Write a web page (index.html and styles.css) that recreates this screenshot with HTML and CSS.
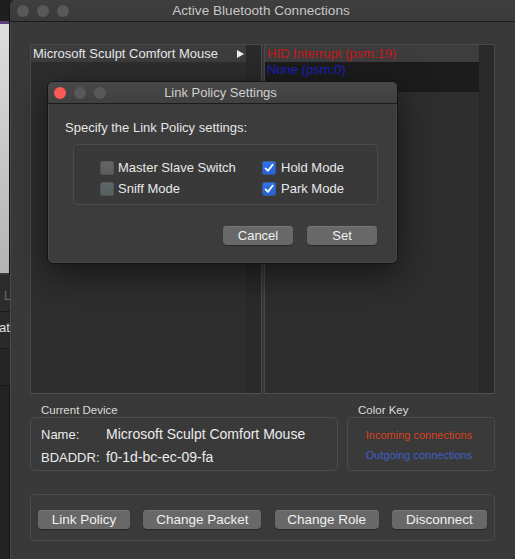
FILE: index.html
```html
<!DOCTYPE html>
<html>
<head>
<meta charset="utf-8">
<link rel="stylesheet" href="styles.css">
</head>
<body>
<div class="screen">
  <div class="desktop">
    <div class="d-top"></div>
    <div class="d-purple"></div>
    <div class="d-light"></div>
    <div class="d-row d-row1"><span class="d-text d-l">L</span></div>
    <div class="d-row d-row2"><span class="d-text d-at">at</span></div>
    <div class="d-row d-row3"></div>
    <div class="d-rest"></div>
  </div>
  <div class="window">
    <div class="titlebar">
      <div class="lights">
        <span class="light gray"></span><span class="light gray"></span><span class="light gray"></span>
      </div>
      <div class="title">Active Bluetooth Connections</div>
    </div>
    <div class="content">
      <div class="lists">
        <div class="list list-left">
          <div class="list-main">
            <div class="row sel"><span>Microsoft Sculpt Comfort Mouse</span><span class="arrow"></span></div>
          </div>
          <div class="scroller"></div>
        </div>
        <div class="list list-right">
          <div class="list-main">
            <div class="row sel red">HID Interrupt (psm:19)</div>
            <div class="row dark blue">None (psm:0)</div>
            <div class="row dark short"></div>
          </div>
          <div class="scroller"></div>
        </div>
      </div>
      <div class="info">
        <div class="group device-group">
          <div class="group-label">Current Device</div>
          <div class="box device-box">
            <div class="kv"><span class="k">Name:</span><span class="v">Microsoft Sculpt Comfort Mouse</span></div>
            <div class="kv"><span class="k">BDADDR:</span><span class="v">f0-1d-bc-ec-09-fa</span></div>
          </div>
        </div>
        <div class="group key-group">
          <div class="group-label">Color Key</div>
          <div class="box key-box">
            <div class="key incoming">Incoming connections</div>
            <div class="key outgoing">Outgoing connections</div>
          </div>
        </div>
      </div>
      <div class="box actions">
        <button class="btn w-link">Link Policy</button>
        <button class="btn w-packet">Change Packet</button>
        <button class="btn w-role">Change Role</button>
        <button class="btn w-disc">Disconnect</button>
      </div>
    </div>
  </div>

  <div class="dialog">
    <div class="dtitlebar">
      <div class="lights dlights">
        <span class="light red-l"></span><span class="light gray"></span><span class="light gray"></span>
      </div>
      <div class="dtitle">Link Policy Settings</div>
    </div>
    <div class="dbody">
      <div class="prompt">Specify the Link Policy settings:</div>
      <div class="box checks">
        <label class="check"><span class="cb"></span>Master Slave Switch</label>
        <label class="check"><span class="cb on"><svg viewBox="0 0 14 14" width="14" height="14"><path d="M3.6 7.4 L6 9.8 L10.6 3.8" fill="none" stroke="#fff" stroke-width="1.8" stroke-linecap="round" stroke-linejoin="round"/></svg></span>Hold Mode</label>
        <label class="check"><span class="cb tint"></span>Sniff Mode</label>
        <label class="check"><span class="cb on"><svg viewBox="0 0 14 14" width="14" height="14"><path d="M3.6 7.4 L6 9.8 L10.6 3.8" fill="none" stroke="#fff" stroke-width="1.8" stroke-linecap="round" stroke-linejoin="round"/></svg></span>Park Mode</label>
      </div>
      <div class="dbuttons">
        <button class="btn dbtn">Cancel</button>
        <button class="btn dbtn">Set</button>
      </div>
    </div>
  </div>
</div>
</body>
</html>
```
FILE: styles.css
```css
html, body {
  margin: 0;
  padding: 0;
}
body {
  width: 515px;
  height: 559px;
  overflow: hidden;
  background: #222;
  font-family: "Liberation Sans", Arial, sans-serif;
  font-size: 13px;
}
.screen {
  position: relative;
  display: flex;
  width: 515px;
  height: 559px;
  overflow: hidden;
}

/* desktop strip */
.desktop {
  width: 10px;
  flex: none;
  display: flex;
  flex-direction: column;
  background: #242424;
  overflow: hidden;
}
.d-top { height: 21px; background: #1f1f1f; }
.d-purple { height: 3px; background: #5b3f7c; }
.d-light { height: 249px; background: linear-gradient(#dedede, #c4c4c4 60%, #b4b4b4); border-bottom: 2px solid #3a3a3a; }
.d-row { height: 36px; border-bottom: 1px solid #1a1a1a; background: #2b2b2b; position: relative; }
.d-row1 { background: #2c2c2c; }
.d-row2 { background: #2a2a2a; }
.d-row3 { background: #262626; }
.d-rest { flex: 1; background: #232323; }
.d-text { font-size: 13px; white-space: nowrap; display: block; }
.d-l { color: #6e6e6e; padding: 14px 0 0 4px; font-size: 12px; }
.d-at { color: #e0e0e0; padding: 8px 0 0 0; margin-left: -1px; }

/* main window */
.window {
  flex: 1;
  background: #393939;
  border-top-left-radius: 6px;
  box-shadow: inset 1px 0 0 #4a4a4a, -1px 0 0 #151515;
  display: flex;
  flex-direction: column;
}
.titlebar {
  height: 21px;
  border-bottom: 1px solid #1c1c1c;
  background: linear-gradient(#3f3f3f, #3a3a3a);
  border-top-left-radius: 6px;
  display: flex;
  align-items: center;
  position: relative;
}
.lights {
  display: flex;
  gap: 8px;
  padding-left: 7px;
}
.light {
  width: 12px;
  height: 12px;
  border-radius: 50%;
  display: block;
}
.light.gray { background: #585858; }
.light.red-l { background: #fc5b55; }
.title {
  position: absolute;
  left: 0;
  right: 0;
  top: 0;
  line-height: 22px;
  text-align: center;
  color: #c6c6c6;
  font-size: 13.6px;
  padding-right: 3px;
}

.content {
  padding: 22px 20px 0 20px;
  display: flex;
  flex-direction: column;
}
.lists {
  display: flex;
  gap: 2px;
  height: 350px;
}
.list {
  box-sizing: border-box;
  border: 1px solid #4a4a4a;
  border-bottom-color: #505050;
  background: #2e2e2e;
  display: flex;
}
.list-left { width: 232px; }
.list-right { width: 231px; }
.list-main {
  flex: 1;
  display: flex;
  flex-direction: column;
}
.scroller {
  width: 14px;
  background: #2a2a2a;
  border-left: 1px solid #272727;
}
.row {
  height: 17px;
  line-height: 17px;
  padding-left: 2px;
  white-space: nowrap;
  color: #e8e8e8;
}
.row.sel {
  background: #3d3d3d;
  display: flex;
  justify-content: space-between;
  align-items: center;
}
.arrow {
  width: 0;
  height: 0;
  border-top: 4px solid transparent;
  border-bottom: 4px solid transparent;
  border-left: 7px solid #f0f0f0;
  margin-right: 2px;
}
.row.red { color: #c8191c; }
.row.dark { background: #1c1c1c; height: 15px; line-height: 15px; }
.row.blue { color: #1e1ec4; }

/* info */
.info {
  display: flex;
  gap: 9px;
}
.group-label {
  font-size: 11.5px;
  color: #dcdcdc;
  padding: 9px 0 0 11px;
  line-height: 14px;
  height: 14px;
}
.box {
  box-sizing: border-box;
  border: 1px solid #4b4b4b;
  border-radius: 4px;
  background: #3a3a3a;
}
.device-group { width: 308px; }
.key-group { width: 148px; }
.device-box {
  height: 54px;
  padding: 5px 0 0 10px;
}
.kv {
  display: flex;
  align-items: baseline;
  line-height: 23px;
  color: #ececec;
  white-space: nowrap;
}
.k { width: 65px; font-size: 13px; }
.v { font-size: 14px; }
.key-box {
  height: 54px;
  padding-top: 7px;
  text-align: center;
}
.key {
  font-size: 11px;
  line-height: 20px;
  padding-right: 4px;
}
.incoming { color: #d9401e; }
.outgoing { color: #3e60c8; }

.actions {
  margin-top: 23px;
  height: 47px;
  padding: 15px 7px 0 7px;
  display: flex;
  justify-content: space-between;
  align-items: flex-start;
}
.btn {
  font-family: "Liberation Sans", Arial, sans-serif;
  font-size: 13.5px;
  color: #f0f0f0;
  background: #686868;
  border: none;
  border-radius: 4px;
  height: 19px;
  line-height: 19px;
  padding: 0;
  box-shadow: 0 1px 1px rgba(0,0,0,0.35), inset 0 1px 0 #777;
}
.w-link { width: 92px; }
.w-packet { width: 118px; }
.w-role { width: 104px; }
.w-disc { width: 95px; }

/* dialog */
.dialog {
  position: absolute;
  left: 47px;
  top: 81px;
  width: 351px;
  height: 183px;
  box-sizing: border-box;
  border: 1px solid #141414;
  border-radius: 6px;
  background: #3c3c3c;
  box-shadow: 0 10px 36px rgba(0,0,0,0.55), 0 0 0 0.5px #555 inset;
  overflow: hidden;
}
.dtitlebar {
  height: 21px;
  border-bottom: 1px solid #1b1b1b;
  background: linear-gradient(#484848, #404040);
  display: flex;
  align-items: center;
  position: relative;
}
.dlights { padding-left: 6px; }
.dtitle {
  position: absolute;
  left: 0;
  right: 0;
  top: 0;
  line-height: 22px;
  text-align: center;
  color: #cfcfcf;
  font-size: 13px;
  padding-right: 4px;
}
.dbody {
  padding: 16px 20px 0 17px;
}
.prompt {
  line-height: 16px;
  color: #e6e6e6;
}
.checks {
  margin: 8px 0 0 8px;
  width: 305px;
  height: 61px;
  background: #393939;
  padding: 12px 0 0 26px;
  display: grid;
  grid-template-columns: 162px auto;
  grid-auto-rows: 21px;
}
.check {
  display: flex;
  align-items: center;
  color: #e8e8e8;
  white-space: nowrap;
}
.cb {
  width: 14px;
  height: 14px;
  border-radius: 3px;
  background: linear-gradient(#666, #5c5c5c);
  margin-right: 4px;
  display: flex;
  box-shadow: inset 0 0 0 0.5px #4a4a4a;
}
.cb.tint { background: linear-gradient(#5f6767, #566060); }
.cb.on { background: linear-gradient(#3174ea, #2560d6); margin-right: 5px; }
.dbuttons {
  margin-top: 21px;
  display: flex;
  justify-content: flex-end;
  gap: 14px;
}
.dbtn { width: 70px; font-size: 13px; }
```
